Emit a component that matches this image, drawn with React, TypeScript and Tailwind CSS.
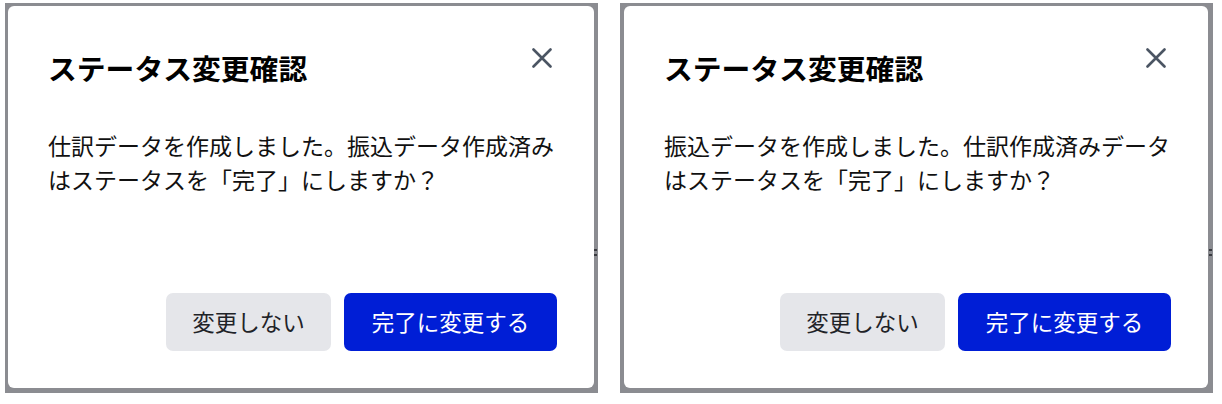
import React from "react";

const font = { fontFamily: '"Noto Sans CJK JP", "Noto Sans", sans-serif' };

function CloseIcon() {
  return (
    <svg width="20" height="20" viewBox="0 0 20 20" fill="none" className="block">
      <path d="M1.5 1.5 L18.5 18.5 M18.5 1.5 L1.5 18.5" stroke="#4b5563" strokeWidth="2.6" strokeLinecap="round" />
    </svg>
  );
}

function Dialog({ body, padClass }: { body: string; padClass: string }) {
  return (
    <div className={`relative w-[593px] h-[390px] bg-[#8b8c91] pt-[3px] pb-[5px] ${padClass}`}>
      <div className="w-full h-full bg-white rounded-[6px] flex flex-col">
        <div className="flex justify-between items-start pl-[40px] pr-[42px]">
          <h2 className="mt-[44px] text-[28.8px] leading-[36px] font-bold text-black">ステータス変更確認</h2>
          <button className="mt-[42px] w-[20px] h-[20px]" aria-label="close">
            <CloseIcon />
          </button>
        </div>
        <p className="mt-[42px] pl-[40px] w-[552px] text-[23px] leading-[34px] text-[#111]">{body}</p>
        <div className="mt-auto flex justify-end gap-[13px] pr-[37px] pb-[37px]">
          <button className="h-[58px] w-[165px] rounded-[7px] bg-[#e5e6ea] text-[22.5px] text-[#1f2328]">変更しない</button>
          <button className="h-[58px] w-[213px] rounded-[7px] bg-[#001ed6] text-[22.5px] text-white">完了に変更する</button>
        </div>
      </div>
      <span className="absolute right-[1px] top-[246px] w-[3px] h-[2px] bg-[#3a3b40]" />
      <span className="absolute right-[1px] top-[251px] w-[3px] h-[2px] bg-[#3a3b40]" />
    </div>
  );
}

export default function App() {
  return (
    <div className="w-[1222px] h-[404px] bg-white pt-[3px] pl-[5px] flex gap-[22px]" style={font}>
      <Dialog padClass="pl-[3px] pr-[4px]" body="仕訳データを作成しました。振込データ作成済みはステータスを「完了」にしますか？" />
      <Dialog padClass="pl-[4px] pr-[5px]" body="振込データを作成しました。仕訳作成済みデータはステータスを「完了」にしますか？" />
    </div>
  );
}
